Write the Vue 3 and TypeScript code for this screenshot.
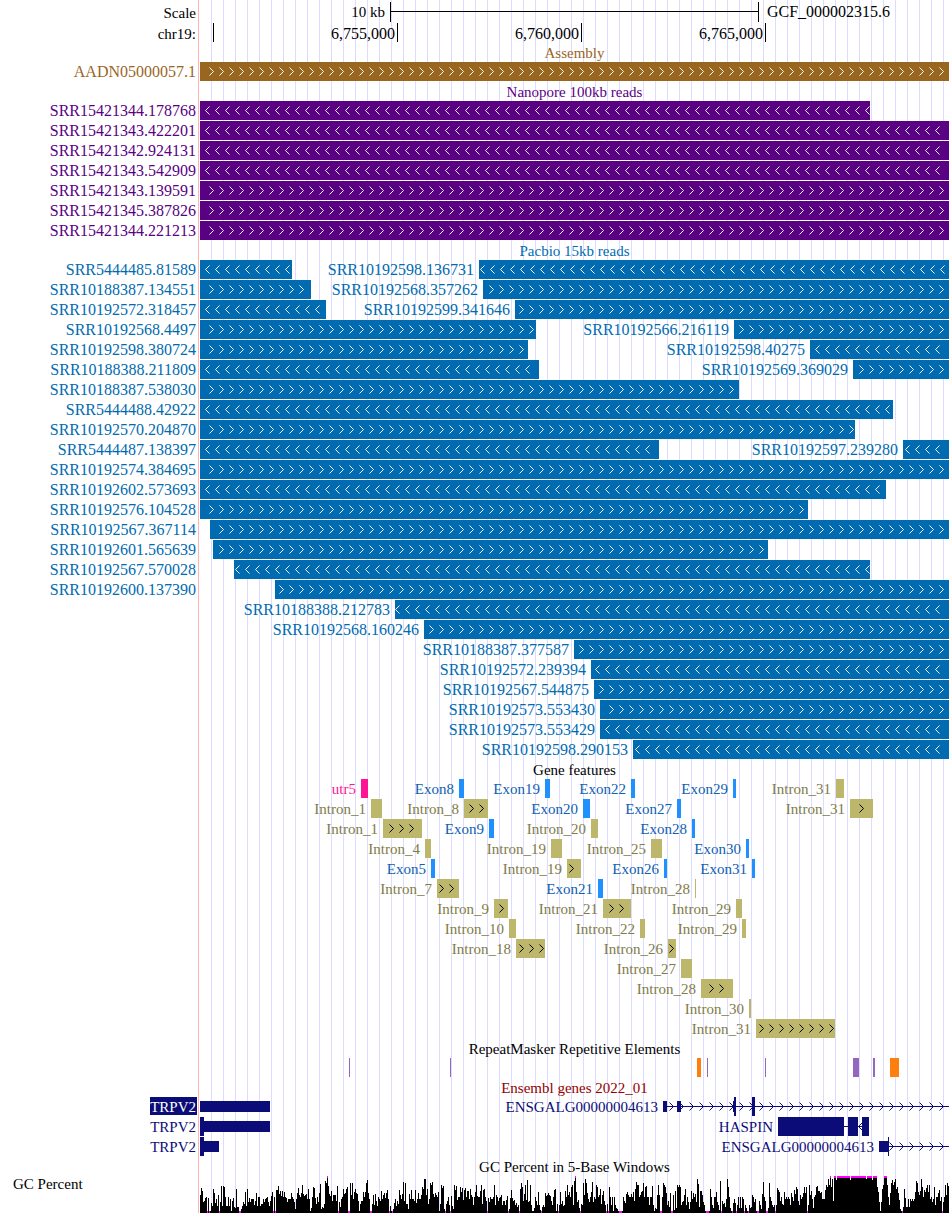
<script setup lang="ts">
type Strand = '>' | '<' | ''

interface Feature {
  name: string
  start: number
  end: number
  strand?: Strand
  kind?: string
  phase?: number
}

interface Block {
  start: number
  end: number
  size: 'thin' | 'full'
}

interface Gene {
  name: string
  blocks: Block[]
  line?: [number, number]
  arrows?: number[]
  strand?: Strand
  active?: boolean
}

interface Track {
  title: string
  tone: string
  rows: Feature[][]
}

/* The window spans ORIGIN to ORIGIN + SPAN in plot units. */
const ORIGIN = 200
const SPAN = 749
const EDGE = ORIGIN + SPAN
const STEP = 10

const pct = (units: number): string => `${(units / SPAN) * 100}%`
const at = (x: number): string => pct(x - ORIGIN)
const labelStyle = (x: number) => ({ right: pct(EDGE - x) })

const f = (name: string, start: number, end: number, strand: Strand = '', kind = '', phase?: number): Feature => ({
  name,
  start,
  end,
  strand,
  kind,
  phase,
})

/* Strand arrows sit on a lattice shared by all rows, and only where they fit whole. */
function arrowsOf(item: Feature): number[] {
  if (!item.strand) return []
  const phase = item.phase ?? (item.strand === '>' ? 9 : 5)
  const out: number[] = []
  for (let x = ORIGIN + phase; x + 5 <= item.end; x += STEP) {
    if (x >= item.start) out.push(x)
  }
  return out
}

const ticks = [
  { x: 213, text: '' },
  { x: 397, text: '6,755,000' },
  { x: 581, text: '6,760,000' },
  { x: 765, text: '6,765,000' },
]

const exon = (name: string, start: number, end: number) => f(name, start, end, '', 'exon')
const intron = (name: string, start: number, end: number, strand: Strand = '') => f(name, start, end, strand, 'intron')

const tracks: Track[] = [
  { title: 'Assembly', tone: 'assembly reads', rows: [[f('AADN05000057.1', 200, 949, '>')]] },
  {
    title: 'Nanopore 100kb reads',
    tone: 'nanopore reads',
    rows: [
      [f('SRR15421344.178768', 200, 870, '<')],
      [f('SRR15421343.422201', 200, 949, '<')],
      [f('SRR15421342.924131', 200, 949, '<')],
      [f('SRR15421343.542909', 200, 949, '<')],
      [f('SRR15421343.139591', 200, 949, '>')],
      [f('SRR15421345.387826', 200, 949, '>')],
      [f('SRR15421344.221213', 200, 949, '>')],
    ],
  },
  {
    title: 'Pacbio 15kb reads',
    tone: 'pacbio reads',
    rows: [
      [f('SRR5444485.81589', 200, 292, '<'), f('SRR10192598.136731', 479, 949, '<', '', 0)],
      [f('SRR10188387.134551', 200, 311, '>'), f('SRR10192568.357262', 483, 949, '>')],
      [f('SRR10192572.318457', 200, 326, '<'), f('SRR10192599.341646', 515, 949, '>')],
      [f('SRR10192568.4497', 200, 536, '>'), f('SRR10192566.216119', 734, 949, '>')],
      [f('SRR10192598.380724', 200, 528, '>'), f('SRR10192598.40275', 810, 949, '<')],
      [f('SRR10188388.211809', 200, 539, '<'), f('SRR10192569.369029', 853, 949, '>')],
      [f('SRR10188387.538030', 200, 739, '>')],
      [f('SRR5444488.42922', 200, 893, '<')],
      [f('SRR10192570.204870', 200, 855, '>')],
      [f('SRR5444487.138397', 200, 659, '<'), f('SRR10192597.239280', 903, 949, '<')],
      [f('SRR10192574.384695', 200, 949, '>')],
      [f('SRR10192602.573693', 200, 886, '<')],
      [f('SRR10192576.104528', 200, 808, '>')],
      [f('SRR10192567.367114', 210, 949, '>')],
      [f('SRR10192601.565639', 213, 768, '>')],
      [f('SRR10192567.570028', 234, 870, '<')],
      [f('SRR10192600.137390', 275, 949, '>')],
      [f('SRR10188388.212783', 395, 949, '<')],
      [f('SRR10192568.160246', 424, 949, '>')],
      [f('SRR10188387.377587', 574, 949, '>')],
      [f('SRR10192572.239394', 591, 949, '<')],
      [f('SRR10192567.544875', 594, 949, '>')],
      [f('SRR10192573.553430', 600, 949, '>')],
      [f('SRR10192573.553429', 600, 949, '<')],
      [f('SRR10192598.290153', 633, 949, '<')],
    ],
  },
  {
    title: 'Gene features',
    tone: 'features',
    rows: [
      [
        f('utr5', 361, 368, '', 'utr'),
        exon('Exon8', 459, 464),
        exon('Exon19', 545, 550),
        exon('Exon22', 631, 635),
        exon('Exon29', 733, 736),
        intron('Intron_31', 836, 844),
      ],
      [
        intron('Intron_1', 371, 382),
        intron('Intron_8', 464, 488, '>'),
        exon('Exon20', 583, 590),
        exon('Exon27', 677, 681),
        intron('Intron_31', 850, 873, '>'),
      ],
      [
        intron('Intron_1', 383, 422, '>'),
        exon('Exon9', 489, 494),
        intron('Intron_20', 591, 598),
        exon('Exon28', 692, 695),
      ],
      [
        intron('Intron_4', 425, 431),
        intron('Intron_19', 551, 562),
        intron('Intron_25', 651, 662),
        exon('Exon30', 746, 749),
      ],
      [
        exon('Exon5', 431, 435),
        intron('Intron_19', 567, 581, '>'),
        exon('Exon26', 664, 667),
        exon('Exon31', 752, 755),
      ],
      [intron('Intron_7', 437, 459, '>'), exon('Exon21', 598, 603), intron('Intron_28', 695, 696)],
      [intron('Intron_9', 494, 508, '>'), intron('Intron_21', 603, 631, '>'), intron('Intron_29', 736, 742)],
      [intron('Intron_10', 509, 516), intron('Intron_22', 640, 645), intron('Intron_29', 742, 746)],
      [intron('Intron_18', 516, 545, '>'), intron('Intron_26', 668, 676, '>')],
      [intron('Intron_27', 681, 692)],
      [intron('Intron_28', 701, 733, '>')],
      [intron('Intron_30', 749, 751)],
      [intron('Intron_31', 756, 835, '>')],
    ],
  },
  {
    title: 'RepeatMasker Repetitive Elements',
    tone: 'repeats',
    rows: [
      [
        f('', 349, 350, '', 'simple'),
        f('', 450, 451, '', 'simple'),
        f('', 697, 701, '', 'low'),
        f('', 707, 708, '', 'simple'),
        f('', 765, 766, '', 'simple'),
        f('', 853, 859, '', 'simple'),
        f('', 873, 875, '', 'simple'),
        f('', 890, 899, '', 'low'),
      ],
    ],
  },
]

const range = (from: number, to: number): number[] => {
  const out: number[] = []
  for (let x = from; x + 5 <= to; x += STEP) out.push(x)
  return out
}

interface GeneRow {
  side?: Gene
  inner?: Gene
}

const geneRows: GeneRow[] = [
  {
    side: { name: 'TRPV2', active: true, blocks: [{ start: 200, end: 270, size: 'thin' }] },
    inner: {
      name: 'ENSGALG00000004613',
      line: [663, 949],
      strand: '>',
      arrows: range(669, 949),
      blocks: [
        { start: 663, end: 667, size: 'thin' },
        { start: 677, end: 681, size: 'thin' },
        { start: 733, end: 734, size: 'thin' },
        { start: 734, end: 736, size: 'full' },
        { start: 752, end: 755, size: 'full' },
      ],
    },
  },
  {
    side: {
      name: 'TRPV2',
      blocks: [
        { start: 200, end: 204, size: 'full' },
        { start: 204, end: 270, size: 'thin' },
      ],
    },
    inner: {
      name: 'HASPIN',
      line: [778, 869],
      strand: '<',
      arrows: [858],
      blocks: [
        { start: 778, end: 844, size: 'full' },
        { start: 848, end: 858, size: 'full' },
        { start: 862, end: 869, size: 'full' },
      ],
    },
  },
  {
    side: {
      name: 'TRPV2',
      blocks: [
        { start: 200, end: 204, size: 'full' },
        { start: 204, end: 219, size: 'thin' },
      ],
    },
    inner: {
      name: 'ENSGALG00000004613',
      line: [879, 949],
      strand: '>',
      arrows: range(889, 949),
      blocks: [
        { start: 879, end: 888, size: 'thin' },
        { start: 888, end: 889, size: 'full' },
      ],
    },
  },
]

const sideOf = (row: Feature[]): Feature | undefined => row.find((i) => i.name && i.start < 300)
const innerOf = (row: Feature[]): Feature[] => row.filter((i) => i.name && i.start >= 300)

/* Bar height per column; 0 falls below the viewing range and CAP is clipped above it. */
const PLOT = 37
const CAP = 35
const gc: number[] = [
  18, 25, 22, 11, 12, 15, 16, 0, 15, 0, 2, 10, 7, 24, 20, 10, 14, 7, 18, 0, 11, 27, 7, 27, 26, 16, 7, 7, 16, 7,
  14, 2, 12, 15, 6, 5, 24, 6, 6, 0, 0, 4, 7, 11, 9, 21, 7, 24, 11, 15, 11, 14, 14, 14, 8, 12, 20, 7, 16, 16,
  7, 9, 9, 14, 11, 14, 15, 16, 11, 7, 12, 17, 21, 0, 16, 0, 23, 23, 27, 19, 22, 17, 22, 16, 21, 16, 15, 11, 14, 14,
  14, 20, 16, 14, 11, 4, 14, 20, 25, 18, 16, 20, 28, 19, 17, 18, 19, 14, 24, 14, 2, 5, 16, 26, 25, 15, 9, 16, 11, 20,
  29, 4, 6, 5, 9, 32, 30, 35, 27, 19, 17, 22, 12, 18, 18, 18, 12, 27, 0, 11, 6, 14, 16, 24, 19, 20, 24, 26, 0, 0,
  30, 18, 30, 14, 21, 24, 20, 19, 12, 2, 9, 12, 12, 21, 16, 21, 30, 33, 20, 14, 0, 0, 9, 18, 8, 19, 12, 7, 16, 14,
  12, 22, 14, 18, 20, 15, 20, 23, 14, 0, 7, 2, 0, 4, 10, 14, 7, 12, 9, 23, 18, 14, 19, 31, 12, 30, 9, 9, 4, 19,
  14, 23, 14, 14, 12, 23, 10, 14, 20, 14, 14, 18, 26, 24, 34, 34, 18, 24, 9, 14, 30, 28, 31, 19, 16, 20, 18, 16, 21, 2,
  9, 28, 25, 27, 4, 0, 9, 12, 16, 8, 0, 17, 7, 4, 28, 23, 27, 13, 16, 16, 26, 21, 25, 13, 23, 25, 16, 22, 22, 14,
  24, 18, 16, 8, 16, 21, 28, 17, 16, 16, 22, 28, 9, 23, 24, 16, 12, 0, 15, 11, 16, 14, 14, 16, 28, 8, 18, 16, 12, 15,
  16, 18, 8, 12, 12, 8, 13, 17, 0, 4, 15, 23, 15, 12, 13, 8, 10, 6, 8, 0, 24, 30, 26, 12, 19, 28, 13, 33, 11, 12,
  28, 8, 2, 2, 5, 16, 12, 8, 21, 8, 3, 0, 6, 8, 6, 20, 17, 18, 20, 18, 17, 12, 8, 16, 23, 24, 2, 9, 0, 8,
  21, 9, 12, 7, 8, 22, 16, 28, 18, 21, 16, 26, 28, 8, 32, 35, 21, 11, 13, 5, 0, 9, 8, 30, 18, 34, 30, 20, 14, 11,
  16, 21, 31, 11, 16, 14, 28, 26, 16, 18, 24, 9, 18, 22, 12, 8, 0, 9, 0, 26, 16, 8, 16, 2, 16, 8, 5, 4, 2, 0,
  0, 0, 2, 16, 12, 10, 19, 21, 18, 16, 16, 19, 16, 21, 12, 24, 31, 28, 28, 16, 18, 21, 22, 30, 16, 26, 27, 16, 16, 8,
  16, 16, 27, 8, 2, 5, 4, 18, 28, 18, 0, 0, 16, 30, 28, 26, 20, 8, 12, 6, 20, 0, 0, 18, 3, 22, 5, 28, 26, 28,
  26, 8, 11, 12, 18, 24, 8, 16, 11, 4, 11, 22, 14, 20, 16, 19, 11, 34, 29, 6, 22, 22, 18, 11, 8, 2, 0, 0, 0, 2,
  24, 16, 8, 5, 16, 16, 21, 11, 8, 3, 32, 0, 12, 9, 10, 6, 14, 34, 26, 16, 5, 2, 0, 10, 14, 10, 0, 8, 16, 5,
  16, 5, 16, 14, 0, 8, 5, 2, 0, 8, 5, 6, 18, 16, 11, 14, 2, 0, 0, 12, 8, 4, 19, 31, 16, 12, 0, 0, 5, 30,
  16, 12, 8, 6, 8, 0, 8, 25, 23, 21, 12, 16, 9, 8, 21, 14, 16, 14, 16, 14, 8, 20, 16, 12, 23, 19, 26, 24, 12, 8,
  18, 14, 16, 20, 26, 20, 26, 0, 8, 28, 18, 22, 14, 5, 16, 18, 26, 27, 22, 22, 20, 21, 14, 14, 14, 23, 28, 26, 34, 28,
  35, 26, 34, 12, 35, 35, 33, 35, 35, 35, 35, 35, 35, 35, 35, 35, 35, 35, 35, 35, 33, 35, 35, 35, 35, 35, 35, 35, 35, 35,
  35, 35, 35, 35, 35, 35, 34, 35, 35, 35, 35, 35, 33, 35, 35, 35, 35, 26, 21, 11, 2, 11, 24, 28, 35, 35, 35, 28, 16, 8,
  20, 30, 33, 28, 31, 34, 24, 26, 20, 13, 4, 2, 0, 6, 24, 15, 6, 6, 14, 6, 14, 12, 14, 12, 14, 21, 32, 30, 21, 18,
  22, 34, 26, 16, 23, 21, 25, 28, 21, 28, 14, 16, 11, 14, 26, 8, 16, 16, 20, 23, 12, 16, 0, 11, 16, 28, 18, 30, 27,
]

const gcBars = gc.map((h, i) => `M${i} ${PLOT}v${-h}h1v${h}z`).join('')
const gcOver = gc.map((h, i) => (h >= CAP ? `M${i} 0h1v2h-1z` : '')).join('')
const gcUnder = gc.map((h, i) => (h === 0 ? `M${i} ${PLOT - 2}h1v2h-1z` : '')).join('')
</script>

<template>
  <main class="browser">
    <svg class="defs" aria-hidden="true">
      <defs>
        <path id="arrow-fwd" d="M.5 .5L4.5 4.5L.5 8.5" />
        <path id="arrow-rev" d="M4.5 .5L.5 4.5L4.5 8.5" />
      </defs>
    </svg>

    <header class="ruler">
      <div class="row scale">
        <span class="side">Scale</span>
        <div class="lane">
          <svg class="marks" aria-hidden="true">
            <rect :x="at(390)" y="11" :width="pct(368)" height="1" />
            <rect :x="at(390)" y="2" width="1" height="20" />
            <rect :x="at(758)" y="2" width="1" height="20" />
          </svg>
          <span class="tag" :style="labelStyle(390)">10 kb</span>
          <span class="genome" :style="{ left: at(758) }">GCF_000002315.6</span>
        </div>
      </div>
      <div class="row coords">
        <span class="side">chr19:</span>
        <div class="lane">
          <svg class="marks" aria-hidden="true">
            <rect v-for="t in ticks" :key="t.x" :x="at(t.x)" y="1" width="1" height="19" />
          </svg>
          <template v-for="t in ticks" :key="t.x">
            <span v-if="t.text" class="tag near" :style="labelStyle(t.x)">{{ t.text }}</span>
          </template>
        </div>
      </div>
    </header>

    <section v-for="track in tracks" :key="track.title" :class="['track', track.tone]">
      <h2>{{ track.title }}</h2>
      <div v-for="(row, r) in track.rows" :key="r" class="row">
        <span class="side">{{ sideOf(row)?.name }}</span>
        <div class="lane">
          <svg class="marks" aria-hidden="true">
            <g v-for="(item, i) in row" :key="i" :class="item.kind">
              <rect :x="at(item.start)" y="0" :width="pct(item.end - item.start)" height="19" />
              <use
                v-for="x in arrowsOf(item)"
                :key="x"
                class="arrow"
                :href="item.strand === '>' ? '#arrow-fwd' : '#arrow-rev'"
                :x="at(x)"
                y="5"
              />
            </g>
          </svg>
          <span
            v-for="(item, i) in innerOf(row)"
            :key="i"
            :class="['tag', item.kind]"
            :style="labelStyle(item.start)"
            >{{ item.name }}</span
          >
        </div>
      </div>
    </section>

    <section class="track genes">
      <h2>Ensembl genes 2022_01</h2>
      <div v-for="(row, r) in geneRows" :key="r" class="row">
        <span class="side"
          ><span :class="{ active: row.side?.active }">{{ row.side?.name }}</span></span
        >
        <div class="lane">
          <svg class="marks" aria-hidden="true">
            <template v-for="(gene, g) in [row.side, row.inner]" :key="g">
              <g v-if="gene">
                <rect
                  v-if="gene.line"
                  :x="at(gene.line[0])"
                  y="9"
                  :width="pct(gene.line[1] - gene.line[0])"
                  height="1"
                />
                <use
                  v-for="x in gene.arrows ?? []"
                  :key="x"
                  class="arrow"
                  :href="gene.strand === '>' ? '#arrow-fwd' : '#arrow-rev'"
                  :x="at(x)"
                  y="5"
                />
                <rect
                  v-for="(b, k) in gene.blocks"
                  :key="k"
                  :x="at(b.start)"
                  :y="b.size === 'full' ? 0 : 4"
                  :width="pct(b.end - b.start)"
                  :height="b.size === 'full' ? 19 : 11"
                />
              </g>
            </template>
          </svg>
          <span v-if="row.inner" class="tag" :style="labelStyle(row.inner.blocks[0].start)">{{
            row.inner.name
          }}</span>
        </div>
      </div>
    </section>

    <section class="track gc">
      <h2>GC Percent in 5-Base Windows</h2>
      <div class="row plot-row">
        <span class="side">GC Percent</span>
        <svg class="plot" :viewBox="`0 0 ${SPAN} ${PLOT}`" preserveAspectRatio="none" role="img" aria-label="GC Percent">
          <path class="value" :d="gcBars" />
          <path class="clip" :d="gcOver" />
          <path class="clip" :d="gcUnder" />
        </svg>
      </div>
    </section>
  </main>
</template>

<style>
body {
  margin: 0;
  background: #fff;
}
</style>

<style scoped>
.browser {
  padding-right: 1px;
  overflow: hidden;
  color: #000;
  font-family: 'Liberation Serif', 'Times New Roman', serif;
  font-size: 15px;
  line-height: 20px;
  background:
    linear-gradient(#ffb4b4, #ffb4b4) 198px 0 / 1px 100% no-repeat,
    repeating-linear-gradient(to right, transparent 0 11px, #dcdcff 11px 12px) 200px 0 / 100% 100% no-repeat;
}

.defs {
  position: absolute;
  width: 0;
  height: 0;
}

.row {
  display: grid;
  grid-template-columns: 200px minmax(0, 1fr);
  height: 20px;
}

.side {
  padding-right: 4px;
  text-align: right;
  white-space: nowrap;
}

.lane {
  position: relative;
}

.marks {
  display: block;
  width: 100%;
  height: 100%;
  fill: currentColor;
  shape-rendering: crispEdges;
}

.arrow {
  fill: none;
  stroke: #fff;
  stroke-width: 1;
  shape-rendering: geometricPrecision;
}

.tag,
.genome {
  position: absolute;
  top: 0;
  white-space: nowrap;
}

.tag {
  padding-right: 5px;
}

.near {
  padding-right: 2px;
}

.genome {
  padding-left: 9px;
}

.reads .row,
.coords .tag,
.genome {
  font-size: 16px;
}

.scale {
  height: 22px;
  line-height: 24px;
}

.scale .side {
  line-height: 26px;
}

.coords {
  height: 21px;
  line-height: 24px;
}

h2 {
  margin: 0 0 0 200px;
  height: 19px;
  font-size: 15px;
  font-weight: 400;
  line-height: 20px;
  text-align: center;
}

.assembly {
  color: #99661f;
}

.nanopore {
  color: #5a0082;
}

.pacbio {
  color: #006bb0;
}

.features .arrow {
  stroke: #000;
}

g.exon {
  fill: #1e90ff;
}

g.intron {
  fill: #bdb76b;
}

g.utr {
  fill: #ff1493;
}

.tag.exon {
  color: #0f60b0;
}

.tag.intron {
  color: #807b48;
}

.tag.utr {
  color: #ff1493;
}

g.simple {
  fill: #9467bd;
}

g.low {
  fill: #ff7f0e;
}

.genes {
  color: #0c0c78;
}

.genes h2 {
  color: #960000;
}

.genes .arrow {
  stroke: #0c0c78;
}

.active {
  display: inline-block;
  height: 18px;
  margin-right: -1px;
  padding-right: 1px;
  color: #fff;
  background: #0c0c78;
}

.plot-row {
  height: 37px;
}

.plot-row .side {
  padding-left: 13px;
  line-height: 17px;
  text-align: left;
}

.plot {
  display: block;
  width: 100%;
  height: 37px;
  shape-rendering: crispEdges;
}

.value {
  fill: #000;
}

.clip {
  fill: #f0f;
}
</style>
